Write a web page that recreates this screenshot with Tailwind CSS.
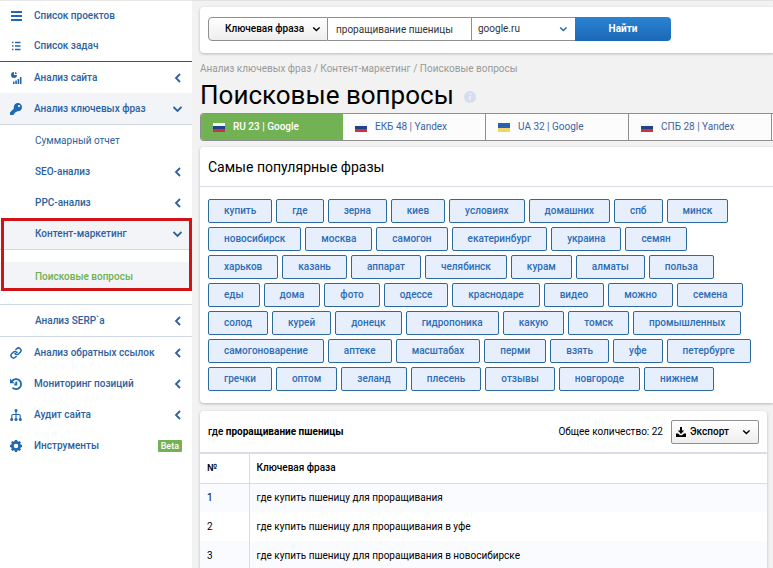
<!DOCTYPE html>
<html lang="ru">
    <head>
        <meta charset="UTF-8">
        <meta name="viewport" content="width=device-width, initial-scale=1.0">
        <title>Поисковые вопросы</title>
        <script src="https://cdn.jsdelivr.net/npm/@tailwindcss/browser@4"></script>
    </head>
    <body class="bg-[#f2f2f2] h-screen overflow-hidden flex font-['Roboto','Liberation_Sans',sans-serif] text-[10px] leading-4 text-black">
        <svg class="hidden">
            <symbol id="left" viewBox="0 0 10 10"><path d="M8 1 4 5l4 4" fill="none" stroke="currentColor" stroke-width="1.8"/></symbol>
            <symbol id="down" viewBox="0 0 10 10"><path d="M1.500 3l4 4 4-4" fill="none" stroke="currentColor" stroke-width="1.8"/></symbol>
            <symbol id="flag-ru" viewBox="0 0 12 9"><path fill="#f4f5f7" d="M0 0h12v3H0z"/><path fill="#23408f" d="M0 3h12v3H0z"/><path fill="#c8353c" d="M0 6h12v3H0z"/></symbol>
            <symbol id="flag-ua" viewBox="0 0 12 9"><path fill="#2463ae" d="M0 0h12v5H0z"/><path fill="#f0d568" d="M0 5h12v4H0z"/></symbol>
        </svg>

        <!-- Sidebar -->
        <nav class="relative w-48 shrink-0 bg-white border-t border-[#e8e8e8] text-[#2c62a0] font-medium">
            <a href="#projects" class="h-[29px] px-2.5 flex items-center gap-3">
                <svg class="size-3" viewBox="0 0 12 12"><path d="M1 2h11M1 6h11M1 10h11" stroke="#1f69b0" stroke-width="2"/></svg>
                <span>Список проектов</span>
            </a>
            <a href="#tasks" class="h-8 px-2.5 flex items-center gap-3 border-b border-[#1d5f8e]">
                <svg class="size-3" viewBox="0 0 12 12"><path d="M2 2.5h1.5M2 6h1.5M2 9.5h1.5M5 2.5h5.5M5 6h5.5M5 9.5h5.5" stroke="#1f69b0" stroke-width="1.3"/></svg>
                <span>Список задач</span>
            </a>
            <a href="#site" class="h-[31px] px-2.5 flex items-center gap-3">
                <svg class="size-3" viewBox="0 0 12 12" fill="#1f69b0"><path d="M4 0v3h3A3 3 0 1 1 4 0zM5 0A2.500 2.500 0 0 1 7 2H5zM3 9.500h1.600V12H3zM5.300 8.500h1.600V12H5.300zM7.600 7h1.600v5H7.600zM9.900 5h1.600v7H9.900z"/></svg>
                <span class="flex-1">Анализ сайта</span>
                <svg class="size-2.5"><use href="#left"/></svg>
            </a>
            <a href="#phrases" class="h-8 px-2.5 flex items-center gap-3 bg-[#f2f4f8] border-b border-[#cfd8e3]">
                <svg class="size-3" viewBox="0 0 512 512" fill="#1f69b0"><path d="M512 176.001C512 273.203 433.202 352 336 352c-11.22 0-22.19-1.062-32.827-3.069l-24.012 27.014A23.999 23.999 0 0 1 261.223 384H224v40c0 13.255-10.745 24-24 24h-40v40c0 13.255-10.745 24-24 24H24c-13.255 0-24-10.745-24-24v-78.059c0-6.365 2.529-12.47 7.029-16.971l161.802-161.802C163.108 213.814 160 195.271 160 176 160 78.798 238.797.001 335.999 0 433.488-.001 512 78.511 512 176.001zM336 128c0 26.51 21.49 48 48 48s48-21.49 48-48-21.49-48-48-48-48 21.49-48 48z"/></svg>
                <span class="flex-1">Анализ ключевых фраз</span>
                <svg class="size-2.5"><use href="#down"/></svg>
            </a>
            <a href="#summary" class="h-[31px] pl-[35px] pr-2.5 flex items-center font-normal">Суммарный отчет</a>
            <a href="#seo" class="h-[31px] pl-[35px] pr-2.5 flex items-center">
                <span class="flex-1">SEO-анализ</span>
                <svg class="size-2.5"><use href="#left"/></svg>
            </a>
            <a href="#ppc" class="h-[31px] pl-[35px] pr-2.5 flex items-center">
                <span class="flex-1">PPC-анализ</span>
                <svg class="size-2.5"><use href="#left"/></svg>
            </a>
            <a href="#content" class="h-8 pl-[35px] pr-2.5 flex items-center bg-[#f2f4f8] border-b border-[#cfd8e3]">
                <span class="flex-1">Контент-маркетинг</span>
                <svg class="size-2.5"><use href="#down"/></svg>
            </a>
            <div class="pt-3 pb-[13px] border-b border-[#cfd8e3]">
                <a href="#questions" class="h-[29px] pl-[35px] flex items-center bg-[#f2f4f8] text-[#6fb052]">Поисковые вопросы</a>
            </div>
            <a href="#serp" class="h-8 pl-[35px] pr-2.5 flex items-center border-b border-[#cfd8e3]">
                <span class="flex-1">Анализ SERP`а</span>
                <svg class="size-2.5"><use href="#left"/></svg>
            </a>
            <a href="#backlinks" class="h-[31px] px-2.5 flex items-center gap-3">
                <svg class="size-3" viewBox="0 0 24 24" fill="none" stroke="#1f69b0" stroke-width="3" stroke-linecap="round"><path d="M10 13a5 5 0 0 0 7.540.540l3-3a5 5 0 0 0-7.070-7.070l-1.720 1.710"/><path d="M14 11a5 5 0 0 0-7.540-.540l-3 3a5 5 0 0 0 7.070 7.070l1.710-1.710"/></svg>
                <span class="flex-1">Анализ обратных ссылок</span>
                <svg class="size-2.5"><use href="#left"/></svg>
            </a>
            <a href="#positions" class="h-[31px] px-2.5 flex items-center gap-3">
                <svg class="size-3" viewBox="0 0 12 12"><path d="M1.800 3.500A5 5 0 1 1 2.500 9.600M6.300 3.500v3H4.300" fill="none" stroke="#1f69b0" stroke-width="1.800"/><path d="M0 .500v4.700h4.700z" fill="#1f69b0"/></svg>
                <span class="flex-1">Мониторинг позиций</span>
                <svg class="size-2.5"><use href="#left"/></svg>
            </a>
            <a href="#audit" class="h-[31px] px-2.5 flex items-center gap-3">
                <svg class="size-3" viewBox="0 0 12 12" fill="#1f69b0"><path d="M6 1v9M1.800 10V6.500Q1.800 5.500 2.800 5.500h6.400q1 0 1 1V10" fill="none" stroke="#1f69b0" stroke-width="1.100"/><circle cx="6" cy="1.500" r="1.500"/><circle cx="1.700" cy="10.400" r="1.500"/><circle cx="6" cy="10.400" r="1.500"/><circle cx="10.300" cy="10.400" r="1.500"/></svg>
                <span class="flex-1">Аудит сайта</span>
                <svg class="size-2.5"><use href="#left"/></svg>
            </a>
            <a href="#tools" class="h-[31px] px-2.5 flex items-center gap-3">
                <svg class="size-3" viewBox="0 0 12 12" fill="none" stroke="#1f69b0"><circle cx="6" cy="6" r="3.600" stroke-width="2.600"/><path d="M6 0v2M6 10v2M0 6h2M10 6h2M1.760 1.760l1.400 1.400M8.840 8.840l1.400 1.400M1.760 10.240l1.400-1.400M8.840 3.160l1.400-1.400" stroke-width="2.400"/></svg>
                <span class="flex-1">Инструменты</span>
                <span class="h-3 px-[3px] rounded-[1px] bg-[#72b254] text-white text-[9px] leading-3">Beta</span>
            </a>
            <!-- Highlight frame -->
            <div class="absolute left-px right-0 top-[217px] h-[73px] border-3 border-[#d01317] pointer-events-none"></div>
        </nav>

        <main class="flex-1 min-w-0 pl-2 border-t border-[#e2e2e2]">
            <!-- Search -->
            <form class="mt-1.5 h-[46px] px-2 py-2.5 flex items-start bg-white rounded-l-sm shadow-[0_1px_3px_rgba(0,0,0,0.25)]">
                <div class="relative w-[120px]">
                    <select aria-label="Тип поиска" class="appearance-none w-full h-6 pl-4 pr-5 border border-[#8f8f8f] rounded-l-sm bg-linear-to-b from-white to-[#eeeeee] font-medium">
                        <option>Ключевая фраза</option>
                    </select>
                    <svg class="absolute right-2 top-2 size-2"><use href="#down"/></svg>
                </div>
                <input type="text" aria-label="Фраза" value="проращивание пшеницы" class="w-36 h-6 px-2 border-y border-r border-[#8f8f8f] bg-white text-[#333]">
                <div class="relative w-[103px]">
                    <select aria-label="Поисковая система" class="appearance-none w-full h-6 px-1.5 border-y border-[#8f8f8f] bg-white text-[#333]">
                        <option>google.ru</option>
                    </select>
                    <svg class="absolute right-2 top-2 size-2 text-[#1f69b0]"><use href="#down"/></svg>
                </div>
                <button type="button" class="w-24 h-6 rounded-r-sm bg-linear-to-b from-[#2b83d2] to-[#1b68b6] text-white font-bold">Найти</button>
            </form>

            <p class="mt-2 text-[#9a9a9a]">
                <a href="#phrases">Анализ ключевых фраз</a> / <a href="#content">Контент-маркетинг</a> / <a href="#questions">Поисковые вопросы</a>
            </p>
            <div class="h-9 flex items-center gap-2.5">
                <h1 class="text-[26px] leading-8">Поисковые вопросы</h1>
                <svg class="size-3 mt-1" viewBox="0 0 12 12"><circle cx="6" cy="6" r="6" fill="#d5ddee"/><path d="M6.800 2.200 6.600 3.500M6.300 5 5.600 9.300" stroke="#f2f2f2" stroke-width="1.500"/></svg>
            </div>

            <!-- Region tabs -->
            <div class="h-7 flex overflow-hidden border-y border-l border-[#8f8f8f] rounded-l-sm bg-[#fcfcfc] text-[#3a64a5]">
                <a href="#ru" class="w-[142px] shrink-0 pl-3 flex items-center gap-2 bg-[#72b254] text-white font-medium"><svg class="w-3 h-[9px]"><use href="#flag-ru"/></svg>RU 23 | Google</a>
                <a href="#ekb" class="w-[143px] shrink-0 pl-3 flex items-center gap-2 border-r border-[#8f8f8f]"><svg class="w-3 h-[9px]"><use href="#flag-ru"/></svg>ЕКБ 48 | Yandex</a>
                <a href="#ua" class="w-[143px] shrink-0 pl-3 flex items-center gap-2 border-r border-[#8f8f8f]"><svg class="w-3 h-[9px]"><use href="#flag-ua"/></svg>UA 32 | Google</a>
                <a href="#spb" class="w-[143px] shrink-0 pl-3 flex items-center gap-2 border-r border-[#8f8f8f]"><svg class="w-3 h-[9px]"><use href="#flag-ru"/></svg>СПБ 28 | Yandex</a>
            </div>

            <!-- Popular phrases -->
            <section class="mt-1.5 bg-white rounded-l-sm shadow-[0_1px_3px_rgba(0,0,0,0.25)]">
                <h2 class="h-10 px-2 text-[14px] leading-10 border-b border-[#d7dce8]">Самые популярные фразы</h2>
                <div id="phrases" class="pl-2 pr-4 py-3 flex flex-wrap gap-1"></div>
            </section>

            <!-- Results -->
            <section class="mt-2 mr-1.5 bg-white rounded-sm shadow-[0_1px_3px_rgba(0,0,0,0.25)]">
                <div class="h-[41px] px-2 flex items-center">
                    <h3 class="flex-1 font-medium">где <b>проращивание пшеницы</b></h3>
                    <span class="mr-2">Общее количество: 22</span>
                    <button type="button" class="w-[88px] h-6 px-1 flex items-center gap-1 border border-[#8f8f8f] rounded-xs bg-linear-to-b from-white to-[#eeeeee] font-medium">
                        <svg class="size-2.5" viewBox="0 0 10 10"><path d="M4 0h2v3.500h2.200L5 7 1.800 3.500H4z"/><path d="M0 6.500h2L4 8.200h2l2-1.700h2V10H0z"/></svg>
                        <span class="flex-1 text-left">Экспорт</span>
                        <svg class="mr-1 size-2"><use href="#down"/></svg>
                    </button>
                </div>
                <table class="w-full text-left border-t-2 border-[#d7dce8]">
                    <thead>
                        <tr class="h-[30px] border-b border-[#d7dce8]">
                            <th class="w-[49px] px-[7px] font-medium border-r border-[#d7dce8]">№</th>
                            <th class="px-[7px] font-medium">Ключевая фраза</th>
                        </tr>
                    </thead>
                    <tbody id="rows"></tbody>
                </table>
            </section>
        </main>

        <script>
        const phrases = [
            'купить', 'где', 'зерна', 'киев', 'условиях', 'домашних', 'спб', 'минск',
            'новосибирск', 'москва', 'самогон', 'екатеринбург', 'украина', 'семян',
            'харьков', 'казань', 'аппарат', 'челябинск', 'курам', 'алматы', 'польза',
            'еды', 'дома', 'фото', 'одессе', 'краснодаре', 'видео', 'можно', 'семена',
            'солод', 'курей', 'донецк', 'гидропоника', 'какую', 'томск', 'промышленных',
            'самогоноварение', 'аптеке', 'масштабах', 'перми', 'взять', 'уфе', 'петербурге',
            'гречки', 'оптом', 'зеланд', 'плесень', 'отзывы', 'новгороде', 'нижнем'
        ];
        const rows = [
            'где купить пшеницу для проращивания',
            'где купить пшеницу для проращивания в уфе',
            'где купить пшеницу для проращивания в новосибирске'
        ];

        document.getElementById('phrases').innerHTML = phrases.map(p =>
            `<button type="button" class="h-6 px-[15px] border border-[#2a6a9c] rounded-xs bg-[#e8effc] text-[#2c6db5] font-medium">${p}</button>`
        ).join('');

        document.getElementById('rows').innerHTML = rows.map((r, i) =>
            `<tr class="h-[29px] odd:bg-[#fafbfe]">
                <td class="px-[7px] border-r border-[#d7dce8]">${i + 1}</td>
                <td class="px-[7px]">${r}</td>
            </tr>`
        ).join('');
        </script>
    </body>
</html>
